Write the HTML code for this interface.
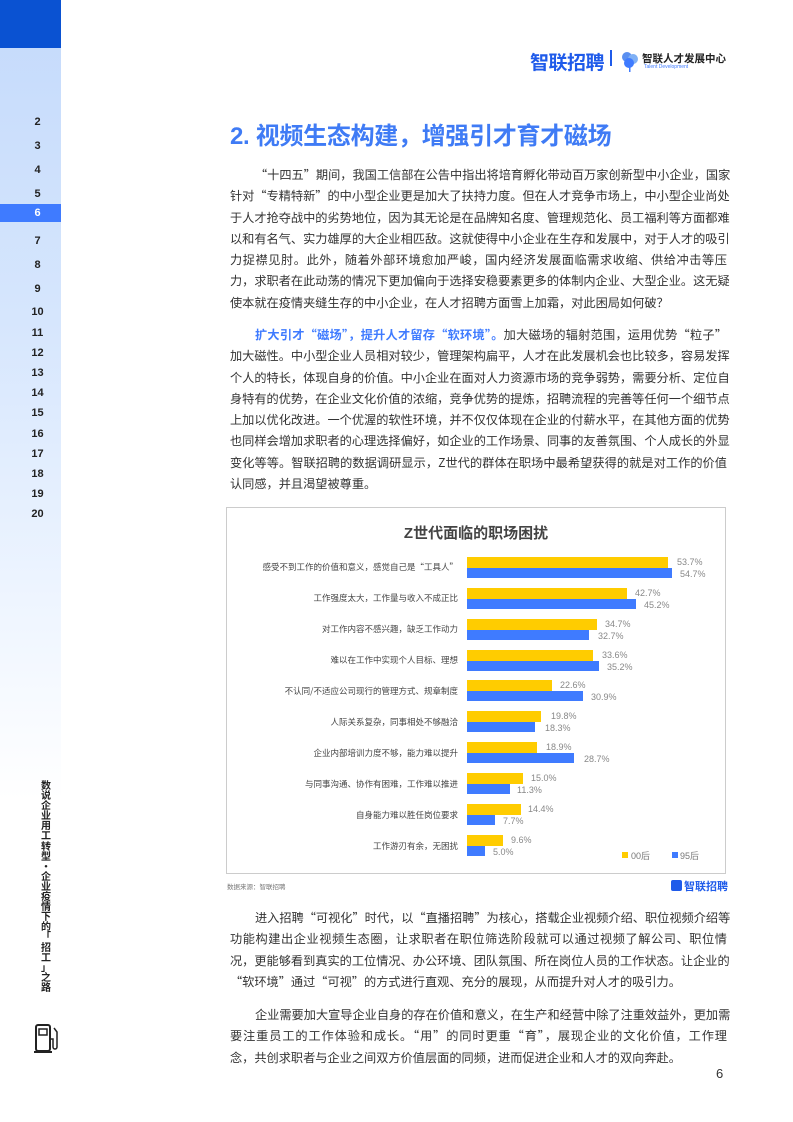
<!DOCTYPE html>
<html><head><meta charset="utf-8"><style>
*{margin:0;padding:0;box-sizing:border-box}
body{width:793px;height:1122px;position:relative;background:#fff;font-family:"Liberation Sans","Noto Sans CJK SC",sans-serif;overflow:hidden;color:#333}
.side{position:absolute;left:0;top:0;width:61px;height:800px;background:linear-gradient(#c4dafb 0%,#d6e6fd 40%,#eef5ff 75%,#fff 100%)}
.sidetop{position:absolute;left:0;top:0;width:61px;height:48px;background:#0a52d2}
.num{position:absolute;left:0;width:61px;padding-left:14px;text-align:center;font-size:11px;font-weight:bold;color:#222;line-height:18px}
.hl{background:#3f7bff;color:#fff}
.vt{position:absolute;left:40px;top:780px;width:12px;font-size:10px;font-weight:bold;color:#222;line-height:10.1px;text-align:center;font-family:"Noto Sans CJK SC",sans-serif}
.t{position:absolute;left:230px;width:497px;font-size:12.2px;line-height:21.3px;color:#333;font-family:"Noto Sans CJK SC","Liberation Sans",sans-serif}
.t div{text-align:justify;text-align-last:justify;height:21.3px;white-space:nowrap;overflow:visible}
.t div.l{text-align-last:left}
.ind{padding-left:25px}
.b{color:#3f7bff;font-weight:bold}
.lbl{position:absolute;right:335px;font-size:8.5px;color:#444;white-space:nowrap;text-align:right;font-family:"Noto Sans CJK SC",sans-serif}
.bar{position:absolute;left:467px;height:10.5px}
.y{background:#ffcc00}.bl{background:#3f7bff}
.v{position:absolute;font-size:9px;color:#888}
</style></head><body>
<div class="side"></div><div class="sidetop"></div>
<div class="num" style="top:113px">2</div>
<div class="num" style="top:137px">3</div>
<div class="num" style="top:161px">4</div>
<div class="num" style="top:185px">5</div>
<div class="num hl" style="top:204px;height:18px">6</div>
<div class="num" style="top:232px">7</div>
<div class="num" style="top:256px">8</div>
<div class="num" style="top:280px">9</div>
<div class="num" style="top:303px">10</div>
<div class="num" style="top:324px">11</div>
<div class="num" style="top:344px">12</div>
<div class="num" style="top:364px">13</div>
<div class="num" style="top:384px">14</div>
<div class="num" style="top:404px">15</div>
<div class="num" style="top:425px">16</div>
<div class="num" style="top:445px">17</div>
<div class="num" style="top:465px">18</div>
<div class="num" style="top:485px">19</div>
<div class="num" style="top:505px">20</div>
<div class="vt">数<br>说<br>企<br>业<br>用<br>工<br>转<br>型<br>·<br>企<br>业<br>疫<br>情<br>下<br>的<br>「<br>招<br>工<br>」<br>之<br>路</div>
<svg style="position:absolute;left:33px;top:1022px" width="32" height="34" viewBox="0 0 32 34"><rect x="3" y="3" width="14" height="26" rx="2" fill="none" stroke="#222" stroke-width="2"/><rect x="6" y="7" width="8" height="6" fill="none" stroke="#222" stroke-width="1.5"/><line x1="1" y1="30" x2="19" y2="30" stroke="#222" stroke-width="2"/><path d="M17 17h3v8a2 2 0 004 0V10l-3-4" fill="none" stroke="#222" stroke-width="1.5"/></svg>

<div style="position:absolute;left:530px;top:48px;font-size:19px;font-weight:bold;color:#1f5bea;letter-spacing:-0.5px">智联招聘</div>
<div style="position:absolute;left:610px;top:50px;width:1.5px;height:16px;background:#1f5bea"></div>
<svg style="position:absolute;left:620px;top:50px" width="20" height="22" viewBox="0 0 20 22"><circle cx="7" cy="7" r="5" fill="#5a8ff0"/><circle cx="13" cy="9" r="5" fill="#7fb0f5"/><circle cx="9" cy="13" r="5" fill="#3f7bff"/><rect x="9" y="15" width="1.5" height="7" fill="#3f7bff"/></svg>
<div style="position:absolute;left:642px;top:51px;font-size:10.5px;color:#222;font-weight:bold">智联人才发展中心</div>
<div style="position:absolute;left:644px;top:64px;font-size:5px;color:#3f7bff">Talent Development</div>

<div style="position:absolute;left:230px;top:116px;font-size:24px;font-weight:bold;color:#3f7bf5;letter-spacing:-0.3px">2. 视频生态构建，增强引才育才磁场</div>

<div class="t" style="top:164px">
<div class="ind">“十四五”期间，我国工信部在公告中指出将培育孵化带动百万家创新型中小企业，国家</div>
<div>针对“专精特新”的中小型企业更是加大了扶持力度。但在人才竞争市场上，中小型企业尚处</div>
<div>于人才抢夺战中的劣势地位，因为其无论是在品牌知名度、管理规范化、员工福利等方面都难</div>
<div>以和有名气、实力雄厚的大企业相匹敌。这就使得中小企业在生存和发展中，对于人才的吸引</div>
<div>力捉襟见肘。此外，随着外部环境愈加严峻，国内经济发展面临需求收缩、供给冲击等压</div>
<div>力，求职者在此动荡的情况下更加偏向于选择安稳要素更多的体制内企业、大型企业。这无疑</div>
<div class="l">使本就在疫情夹缝生存的中小企业，在人才招聘方面雪上加霜，对此困局如何破？</div>
</div>
<div class="t" style="top:324px">
<div class="ind"><span class="b">扩大引才“磁场”，提升人才留存“软环境”。</span>加大磁场的辐射范围，运用优势“粒子”</div>
<div>加大磁性。中小型企业人员相对较少，管理架构扁平，人才在此发展机会也比较多，容易发挥</div>
<div>个人的特长，体现自身的价值。中小企业在面对人力资源市场的竞争弱势，需要分析、定位自</div>
<div>身特有的优势，在企业文化价值的浓缩，竞争优势的提炼，招聘流程的完善等任何一个细节点</div>
<div>上加以优化改进。一个优渥的软性环境，并不仅仅体现在企业的付薪水平，在其他方面的优势</div>
<div>也同样会增加求职者的心理选择偏好，如企业的工作场景、同事的友善氛围、个人成长的外显</div>
<div>变化等等。智联招聘的数据调研显示，Z世代的群体在职场中最希望获得的就是对工作的价值</div>
<div class="l">认同感，并且渴望被尊重。</div>
</div>

<div style="position:absolute;left:226px;top:507px;width:500px;height:367px;border:1px solid #ccc"></div>
<div style="position:absolute;left:226px;top:522px;width:500px;text-align:center;font-size:15px;font-weight:bold;color:#444">Z世代面临的职场困扰</div>

<div class="lbl" style="top:561px">感受不到工作的价值和意义，感觉自己是“工具人”</div>
<div class="bar y" style="top:557px;width:201px"></div><div class="bar bl" style="top:567.5px;width:205px"></div>
<div class="v" style="left:677px;top:557px">53.7%</div><div class="v" style="left:680px;top:569px">54.7%</div>

<div class="lbl" style="top:592px">工作强度太大，工作量与收入不成正比</div>
<div class="bar y" style="top:588px;width:160px"></div><div class="bar bl" style="top:598.5px;width:169px"></div>
<div class="v" style="left:635px;top:588px">42.7%</div><div class="v" style="left:644px;top:600px">45.2%</div>

<div class="lbl" style="top:623px">对工作内容不感兴趣，缺乏工作动力</div>
<div class="bar y" style="top:619px;width:130px"></div><div class="bar bl" style="top:629.5px;width:122px"></div>
<div class="v" style="left:605px;top:619px">34.7%</div><div class="v" style="left:598px;top:631px">32.7%</div>

<div class="lbl" style="top:654px">难以在工作中实现个人目标、理想</div>
<div class="bar y" style="top:650px;width:126px"></div><div class="bar bl" style="top:660.5px;width:132px"></div>
<div class="v" style="left:602px;top:650px">33.6%</div><div class="v" style="left:607px;top:662px">35.2%</div>

<div class="lbl" style="top:685px">不认同/不适应公司现行的管理方式、规章制度</div>
<div class="bar y" style="top:680px;width:85px"></div><div class="bar bl" style="top:690.5px;width:116px"></div>
<div class="v" style="left:560px;top:680px">22.6%</div><div class="v" style="left:591px;top:692px">30.9%</div>

<div class="lbl" style="top:716px">人际关系复杂，同事相处不够融洽</div>
<div class="bar y" style="top:711px;width:74px"></div><div class="bar bl" style="top:721.5px;width:68px"></div>
<div class="v" style="left:551px;top:711px">19.8%</div><div class="v" style="left:545px;top:723px">18.3%</div>

<div class="lbl" style="top:747px">企业内部培训力度不够，能力难以提升</div>
<div class="bar y" style="top:742px;width:70px"></div><div class="bar bl" style="top:752.5px;width:107px"></div>
<div class="v" style="left:546px;top:742px">18.9%</div><div class="v" style="left:584px;top:754px">28.7%</div>

<div class="lbl" style="top:778px">与同事沟通、协作有困难，工作难以推进</div>
<div class="bar y" style="top:773px;width:56px"></div><div class="bar bl" style="top:783.5px;width:43px"></div>
<div class="v" style="left:531px;top:773px">15.0%</div><div class="v" style="left:517px;top:785px">11.3%</div>

<div class="lbl" style="top:809px">自身能力难以胜任岗位要求</div>
<div class="bar y" style="top:804px;width:54px"></div><div class="bar bl" style="top:814.5px;width:28px"></div>
<div class="v" style="left:528px;top:804px">14.4%</div><div class="v" style="left:503px;top:816px">7.7%</div>

<div class="lbl" style="top:840px">工作游刃有余，无困扰</div>
<div class="bar y" style="top:835px;width:36px"></div><div class="bar bl" style="top:845.5px;width:18px"></div>
<div class="v" style="left:511px;top:835px">9.6%</div><div class="v" style="left:493px;top:847px">5.0%</div>

<div style="position:absolute;left:622px;top:852px;width:6px;height:6px;background:#ffcc00"></div>
<div class="v" style="left:631px;top:849px;color:#777">00后</div>
<div style="position:absolute;left:672px;top:852px;width:6px;height:6px;background:#3f7bff"></div>
<div class="v" style="left:680px;top:849px;color:#777">95后</div>

<div style="position:absolute;left:227px;top:881px;font-size:6.5px;color:#777">数据来源：智联招聘</div>
<div style="position:absolute;left:671px;top:880px;width:11px;height:11px;background:#1f5bea;border-radius:2px"></div>
<div style="position:absolute;left:684px;top:878px;font-size:11px;font-weight:bold;color:#1f5bea">智联招聘</div>

<div class="t" style="top:907px">
<div class="ind">进入招聘“可视化”时代，以“直播招聘”为核心，搭载企业视频介绍、职位视频介绍等</div>
<div>功能构建出企业视频生态圈，让求职者在职位筛选阶段就可以通过视频了解公司、职位情</div>
<div>况，更能够看到真实的工位情况、办公环境、团队氛围、所在岗位人员的工作状态。让企业的</div>
<div class="l">“软环境”通过“可视”的方式进行直观、充分的展现，从而提升对人才的吸引力。</div>
</div>
<div class="t" style="top:1004px">
<div class="ind">企业需要加大宣导企业自身的存在价值和意义，在生产和经营中除了注重效益外，更加需</div>
<div>要注重员工的工作体验和成长。“用”的同时更重“育”，展现企业的文化价值，工作理</div>
<div class="l">念，共创求职者与企业之间双方价值层面的同频，进而促进企业和人才的双向奔赴。</div>
</div>
<div style="position:absolute;left:716px;top:1066px;font-size:13px;color:#333">6</div>
</body></html>
